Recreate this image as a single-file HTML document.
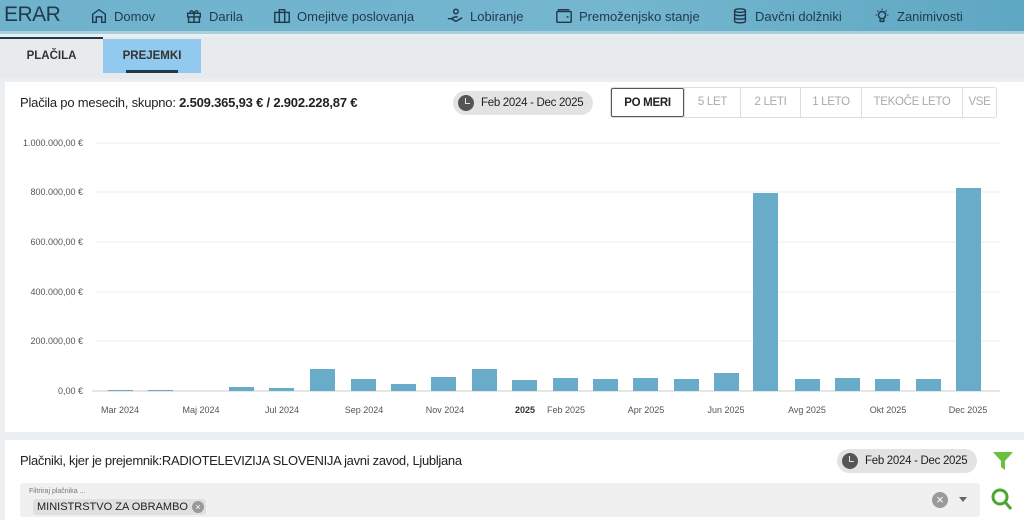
<!DOCTYPE html>
<html><head><meta charset="utf-8"><style>
*{box-sizing:border-box;margin:0;padding:0}
body{width:1024px;height:517px;overflow:hidden;background:#eceff1;font-family:"Liberation Sans",sans-serif;color:#222;position:relative}
.hdr{position:absolute;left:0;top:0;width:1024px;height:34px;background:linear-gradient(90deg,#6fb2cc,#74b6ce 60%,#5ea7c2);border-bottom:3px solid #a7cfdd}
.logo{position:absolute;left:4px;top:3px;font-size:21px;color:#1f3a4d;letter-spacing:-0.5px}
.nav{position:absolute;top:7px;font-size:13px;color:#1f3a4d;display:flex;align-items:center;gap:6px;white-space:nowrap}
.nav svg{width:18px;height:18px}
.tabs{position:absolute;left:0;top:37px;width:1024px;height:42px;background:#e8ebee}
.tab{position:absolute;top:2px;height:34px;line-height:34px;font-size:11.5px;font-weight:bold;color:#333;text-align:center}
.card{position:absolute;background:#fff}
.pill{position:absolute;background:#e3e3e3;border-radius:12px;height:24px;font-size:11.5px;line-height:24px;padding-left:28px;padding-right:10px;white-space:nowrap;letter-spacing:-0.3px}
.pill i{position:absolute;left:5px;top:4px;width:16px;height:16px;border-radius:50%;background:#555}
.pill i:after{content:"";position:absolute;left:7px;top:3px;width:4px;height:5px;border-left:1.5px solid #e3e3e3;border-bottom:1.5px solid #e3e3e3}
.btns{position:absolute;left:610px;top:87px;display:flex;height:31px;border:1px solid #ddd;border-radius:3px;background:#fff}
.btns div{border-left:1px solid #ddd;font-size:11.5px;line-height:29px;color:#aaa;text-align:center;white-space:nowrap;letter-spacing:-0.3px}
.btns div:first-child{border:1px solid #555;color:#222;font-weight:bold;border-radius:2px}
</style></head><body>
<div class="hdr">
<div class="logo">ERAR</div>
<div class="nav" style="left:90px"><svg viewBox="0 0 20 20" fill="none" stroke="#1f3a4d" stroke-width="1.6"><path d="M3 17V8l7-5 7 5v9h-4v-6H7v6z"/></svg>Domov</div>
<div class="nav" style="left:185px"><svg viewBox="0 0 20 20" fill="none" stroke="#1f3a4d" stroke-width="1.6"><rect x="3" y="7" width="14" height="4"/><path d="M4 11v6h12v-6M10 7v10M10 7C8 3 5 4 6 6M10 7c2-4 5-3 4-1"/></svg>Darila</div>
<div class="nav" style="left:273px"><svg viewBox="0 0 20 20" fill="none" stroke="#1f3a4d" stroke-width="1.6"><rect x="2" y="6" width="16" height="11"/><path d="M7 6V3h6v3M7 6v11M13 6v11"/></svg>Omejitve poslovanja</div>
<div class="nav" style="left:446px"><svg viewBox="0 0 20 20" fill="none" stroke="#1f3a4d" stroke-width="1.6"><circle cx="11" cy="5" r="2.5"/><path d="M2 13h4l5 3 7-4M6 13l4-2h3"/></svg>Lobiranje</div>
<div class="nav" style="left:555px"><svg viewBox="0 0 20 20" fill="none" stroke="#1f3a4d" stroke-width="1.6"><rect x="2" y="5" width="16" height="12" rx="1"/><path d="M4 5V3h12M13 11h2"/></svg>Premoženjsko stanje</div>
<div class="nav" style="left:731px"><svg viewBox="0 0 20 20" fill="none" stroke="#1f3a4d" stroke-width="1.6"><ellipse cx="10" cy="4" rx="6" ry="2"/><path d="M4 4v12c0 2 12 2 12 0V4M4 8c0 2 12 2 12 0M4 12c0 2 12 2 12 0"/></svg>Davčni dolžniki</div>
<div class="nav" style="left:873px"><svg viewBox="0 0 20 20" fill="none" stroke="#1f3a4d" stroke-width="1.6"><circle cx="10" cy="9" r="4"/><path d="M8 13v3h4v-3M10 2v1M3 9h1M16 9h1M5 4l1 1M15 4l-1 1"/></svg>Zanimivosti</div>
</div>
<div class="tabs">
<div class="tab" style="left:0;width:103px;border-top:2px solid #1f3a4d;top:0;height:36px;line-height:34px">PLAČILA</div>
<div class="tab" style="left:103px;width:98px;background:#92c9ee">PREJEMKI<div style="position:absolute;left:23px;right:23px;bottom:0;height:3px;background:#1f3a4d"></div></div>
</div>
<div class="card" style="left:5px;top:82px;width:1019px;height:350px"></div>
<div style="position:absolute;left:20px;top:95px;font-size:13px;letter-spacing:-0.2px;white-space:nowrap">Plačila po mesecih, skupno: <span style="font-weight:bold">2.509.365,93 € / 2.902.228,87 €</span></div>
<div class="pill" style="left:453px;top:91px">Feb 2024 - Dec 2025<i></i></div>
<div class="btns"><div style="width:73px">PO MERI</div><div style="width:56px">5 LET</div><div style="width:60px">2 LETI</div><div style="width:61px">1 LETO</div><div style="width:101px">TEKOČE LETO</div><div style="width:34px">VSE</div></div>
<svg style="position:absolute;left:0;top:130px" width="1024" height="295" font-family="Liberation Sans" font-size="9" fill="#555">
<g stroke="#eee"><line x1="96" x2="1000" y1="13" y2="13"/><line x1="96" x2="1000" y1="62" y2="62"/><line x1="96" x2="1000" y1="112" y2="112"/><line x1="96" x2="1000" y1="162" y2="162"/><line x1="96" x2="1000" y1="211" y2="211"/><line x1="92" x2="1000" y1="261" y2="261" stroke="#ccc"/></g>
<g text-anchor="end"><text x="83" y="16">1.000.000,00 €</text><text x="83" y="65">800.000,00 €</text><text x="83" y="115">600.000,00 €</text><text x="83" y="165">400.000,00 €</text><text x="83" y="214">200.000,00 €</text><text x="83" y="264">0,00 €</text></g>
<g fill="#68acc9">
<rect x="108" y="260" width="25" height="1"/><rect x="148" y="260" width="25" height="1"/><rect x="229" y="257" width="25" height="4"/><rect x="269" y="258" width="25" height="3"/><rect x="310" y="239" width="25" height="22"/><rect x="351" y="249" width="25" height="12"/><rect x="391" y="254" width="25" height="7"/><rect x="431" y="247" width="25" height="14"/><rect x="472" y="239" width="25" height="22"/><rect x="512" y="250" width="25" height="11"/><rect x="553" y="248" width="25" height="13"/><rect x="593" y="249" width="25" height="12"/><rect x="633" y="248" width="25" height="13"/><rect x="674" y="249" width="25" height="12"/><rect x="714" y="243" width="25" height="18"/><rect x="753" y="63" width="25" height="198"/><rect x="795" y="249" width="25" height="12"/><rect x="835" y="248" width="25" height="13"/><rect x="875" y="249" width="25" height="12"/><rect x="916" y="249" width="25" height="12"/><rect x="956" y="58" width="25" height="203"/>
</g>
<g text-anchor="middle"><text x="120" y="283">Mar 2024</text><text x="201" y="283">Maj 2024</text><text x="282" y="283">Jul 2024</text><text x="364" y="283">Sep 2024</text><text x="445" y="283">Nov 2024</text><text x="525" y="283" font-weight="bold" fill="#333">2025</text><text x="566" y="283">Feb 2025</text><text x="646" y="283">Apr 2025</text><text x="726" y="283">Jun 2025</text><text x="807" y="283">Avg 2025</text><text x="888" y="283">Okt 2025</text><text x="968" y="283">Dec 2025</text></g>
</svg>
<div class="card" style="left:5px;top:440px;width:1019px;height:80px"></div>
<div style="position:absolute;left:20px;top:453px;font-size:13px;letter-spacing:-0.3px;white-space:nowrap">Plačniki, kjer je prejemnik:<span>RADIOTELEVIZIJA SLOVENIJA javni zavod, Ljubljana</span></div>
<div class="pill" style="left:837px;top:449px">Feb 2024 - Dec 2025<i></i></div>
<svg style="position:absolute;left:992px;top:451px" width="22" height="20"><path d="M1 1h20l-8 9v9l-4-3v-6z" fill="#6cbf3c"/></svg>
<div style="position:absolute;left:20px;top:483px;width:960px;height:34px;background:#f0f0f0;border-radius:3px"></div>
<div style="position:absolute;left:29px;top:488px;font-size:7px;color:#777">Filtriraj plačnika ...</div>
<div style="position:absolute;left:33px;top:499px;height:16px;background:#e0e0e0;border-radius:3px;font-size:11px;line-height:16px;padding:0 18px 0 4px;white-space:nowrap">MINISTRSTVO ZA OBRAMBO<span style="position:absolute;right:2px;top:2px;width:12px;height:12px;border-radius:50%;background:#999;color:#fff;font-size:9px;line-height:12px;text-align:center">×</span></div>
<div style="position:absolute;left:932px;top:492px;width:16px;height:16px;border-radius:50%;background:#999;color:#fff;font-size:13px;line-height:16px;text-align:center">×</div>
<div style="position:absolute;left:959px;top:497px;border-left:4px solid transparent;border-right:4px solid transparent;border-top:5px solid #666"></div>
<svg style="position:absolute;left:990px;top:487px" width="24" height="26" fill="none" stroke="#4aa630" stroke-width="3"><circle cx="10" cy="10" r="7"/><path d="M15 15l6 7"/></svg>
</body></html>
